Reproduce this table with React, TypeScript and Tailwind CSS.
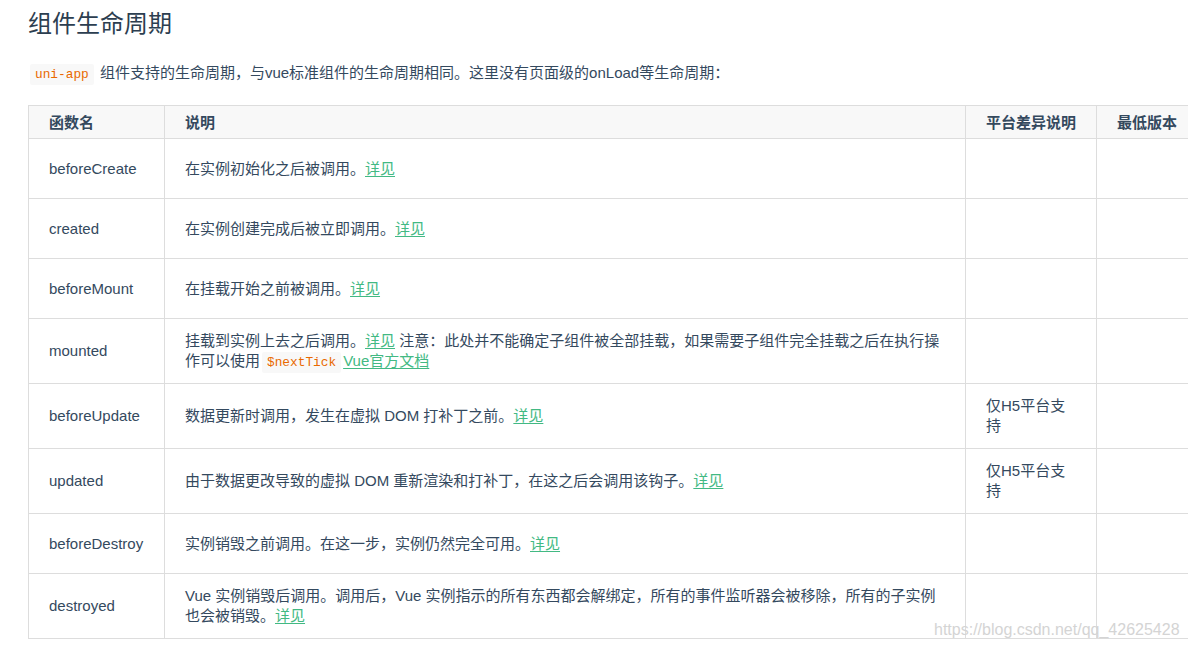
const font = { fontFamily: '"Liberation Sans", "Noto Sans CJK SC", sans-serif' }

type Row = {
  name: string
  desc: React.ReactNode
  platform?: string
}

function Code({ children }: { children: React.ReactNode }) {
  return (
    <code className="mx-[2px] rounded-[2px] bg-[#f8f8f8] px-[5px] py-[3px] font-['Liberation_Mono',monospace] text-[12.8px] leading-none text-[#e96900]">
      {children}
    </code>
  )
}

function More({ text = '详见' }: { text?: string }) {
  return <a className="text-[#42b983] underline underline-offset-2">{text}</a>
}

const rows: Row[] = [
  { name: 'beforeCreate', desc: <>在实例初始化之后被调用。<More /></> },
  { name: 'created', desc: <>在实例创建完成后被立即调用。<More /></> },
  { name: 'beforeMount', desc: <>在挂载开始之前被调用。<More /></> },
  {
    name: 'mounted',
    desc: (
      <>
        挂载到实例上去之后调用。<More /> 注意：此处并不能确定子组件被全部挂载，如果需要子组件完全挂载之后在执行操作可以使用
        <Code>$nextTick</Code>
        <More text="Vue官方文档" />
      </>
    )
  },
  { name: 'beforeUpdate', desc: <>数据更新时调用，发生在虚拟 DOM 打补丁之前。<More /></>, platform: '仅H5平台支持' },
  { name: 'updated', desc: <>由于数据更改导致的虚拟 DOM 重新渲染和打补丁，在这之后会调用该钩子。<More /></>, platform: '仅H5平台支持' },
  { name: 'beforeDestroy', desc: <>实例销毁之前调用。在这一步，实例仍然完全可用。<More /></> },
  {
    name: 'destroyed',
    desc: (
      <>
        Vue 实例销毁后调用。调用后，Vue 实例指示的所有东西都会解绑定，所有的事件监听器会被移除，所有的子实例也会被销毁。<More />
      </>
    )
  }
]

export default function App() {
  return (
    <main className="relative h-[651px] w-[1188px] overflow-hidden bg-white text-[#34495e]" style={font}>
      <div className="pl-[28px] pt-[9px]">
        <h2 className="text-[24px] leading-[30px] text-[#2c3e50]">组件生命周期</h2>
        <p className="mt-[24px] text-[15px] leading-[20px]">
          <Code>uni-app</Code> 组件支持的生命周期，与vue标准组件的生命周期相同。这里没有页面级的onLoad等生命周期：
        </p>
        <table className="mt-[22px] w-[1200px] table-fixed border-collapse text-[15px] leading-[20px]">
          <colgroup>
            <col className="w-[136px]" />
            <col className="w-[801px]" />
            <col className="w-[131px]" />
            <col className="w-[132px]" />
          </colgroup>
          <thead>
            <tr className="h-[33px] bg-[#f8f8f8]">
              <th className="border border-[#dddddd] px-5 pb-[5px] pt-[7px] text-left font-bold">函数名</th>
              <th className="border border-[#dddddd] px-5 pb-[5px] pt-[7px] text-left font-bold">说明</th>
              <th className="border border-[#dddddd] px-5 pb-[5px] pt-[7px] text-left font-bold">平台差异说明</th>
              <th className="border border-[#dddddd] px-5 pb-[5px] pt-[7px] text-left font-bold">最低版本</th>
            </tr>
          </thead>
          <tbody>
            {rows.map((r) => (
              <tr key={r.name} className="h-[60px]">
                <td className="border border-[#dddddd] px-5 py-3">{r.name}</td>
                <td className="border border-[#dddddd] px-5 py-3">{r.desc}</td>
                <td className="border border-[#dddddd] px-5 py-3">{r.platform}</td>
                <td className="border border-[#dddddd] px-5 py-3"></td>
              </tr>
            ))}
          </tbody>
        </table>
      </div>
      <div className="absolute left-[934px] top-[620px] font-['Liberation_Sans',sans-serif] text-[16px] leading-[20px] text-[#d4d4d4]">
        https://blog.csdn.net/qq_42625428
      </div>
    </main>
  )
}
